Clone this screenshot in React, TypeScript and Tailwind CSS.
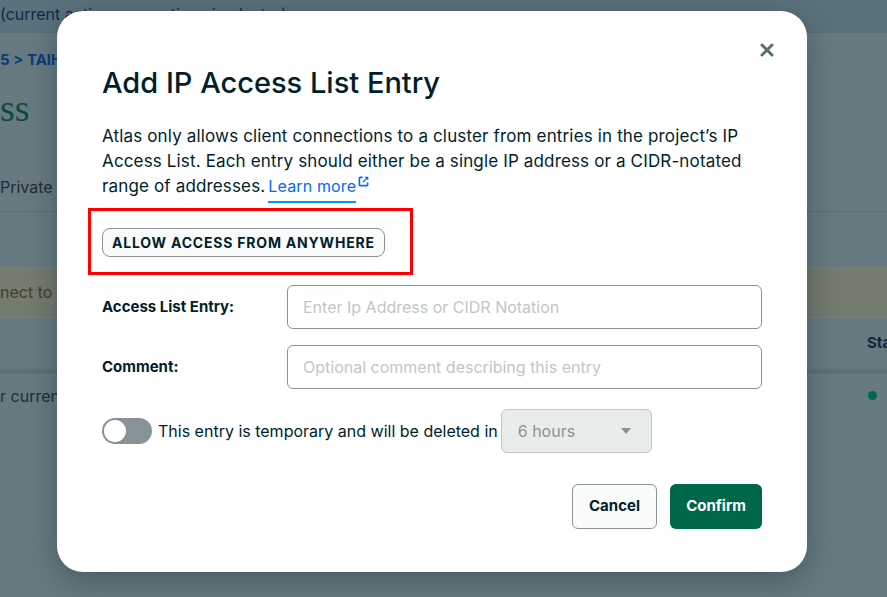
import React from 'react';

const font = { fontFamily: 'Inter, "Noto Sans", sans-serif' };

const Background = () => {
  return (
    <div className="h-[597px] w-full overflow-hidden bg-[#677a81]">
      <div className="h-[33px] bg-[#5b717c] pt-[2px] text-[16px] text-[#0b2c49]">
        (current active connections in cluster)
      </div>
      <div>
        <div className="-ml-[10px] pt-[16px] text-[15px] font-bold text-[#0b3b78]">05 &gt; TAIHI</div>
        <div className="mt-[14px] text-[38px] leading-[44px] text-[#0f4a3c]" style={{ fontFamily: '"Liberation Serif", serif' }}>
          ss
        </div>
        <div className="mt-[45px] text-[16px] leading-[24px] text-[#1d2d35]">Private</div>
        <div className="mt-[12px] h-px bg-[#5d6f77]" />
        <div className="mt-[55px] flex h-[51px] items-center border-y border-[#7d8069] bg-[#747b6f] text-[16px] text-[#4a3d1e]">
          nect to
        </div>
        <div className="flex h-[51px] items-center whitespace-nowrap pl-[867px] text-[15px] font-bold text-[#12283a]">Status</div>
        <div className="h-[5px] bg-[#5f7279]" />
        <div className="flex h-[44px] items-center justify-between text-[16px] text-[#1d2d35]">
          <span>r current IP</span>
          <span className="mr-[10px] h-[9px] w-[9px] rounded-full bg-[#00684a]" />
        </div>
      </div>
    </div>
  );
};

const Modal = () => {
  return (
    <div className="absolute left-[57px] top-[11px] h-[561px] w-[750px] rounded-[26px] bg-white px-[45px] pt-[54px] shadow-[0_8px_30px_rgba(0,30,43,0.35)]">
      <button className="absolute right-[33px] top-[32px] text-[#5c6c75]">
        <svg width="14" height="14" viewBox="0 0 14 14">
          <path d="M2 2 L12 12 M12 2 L2 12" stroke="currentColor" strokeWidth="3" strokeLinecap="round" />
        </svg>
      </button>
      <h1 className="text-[29px] font-medium leading-[36px] text-[#001e2b]">Add IP Access List Entry</h1>
      <p className="mt-[23px] text-[17px] leading-[25px] tracking-[0.15px] text-[#001e2b]">
        Atlas only allows client connections to a cluster from entries in the project’s IP Access List. Each entry should either be a single IP address or a CIDR-notated range of addresses.{' '}
        <a className="-ml-[2px] text-[16px] text-[#016bf8]">
          <span className="border-b-2 border-[#0498ec] pb-[5px]">Learn more</span>
          <svg className="ml-[2px] inline-block align-[5px]" width="11" height="11" viewBox="0 0 12 12">
            <path d="M5 1.5H2.5a1 1 0 0 0-1 1v7a1 1 0 0 0 1 1h7a1 1 0 0 0 1-1V7" fill="none" stroke="#016bf8" strokeWidth="1.8" />
            <path d="M7 0.8h4.2V5L9.6 3.4 6 7 5 6l3.6-3.6z" fill="#016bf8" />
          </svg>
        </a>
      </p>
      <div className="-ml-[14px] mt-[9px] w-[325px] border-[3px] border-[#ff0000] px-[11px] pb-[15px] pt-[17px]">
        <button className="whitespace-nowrap rounded-[8px] border border-[#889397] bg-[#f9fbfa] px-[9px] py-[3px] text-[14px] font-bold tracking-[0.8px] text-[#001e2b]">
          ALLOW ACCESS FROM ANYWHERE
        </button>
      </div>
      <div className="mt-[10px] flex items-center">
        <label className="w-[185px] text-[15px] font-bold text-[#001e2b]">Access List Entry:</label>
        <input
          className="h-[44px] flex-1 rounded-[6px] border border-[#889397] px-[15px] text-[16px] outline-none placeholder:text-[#c1c7c6]"
          placeholder="Enter Ip Address or CIDR Notation"
        />
      </div>
      <div className="mt-[16px] flex items-center">
        <label className="w-[185px] text-[15px] font-bold text-[#001e2b]">Comment:</label>
        <input
          className="h-[44px] flex-1 rounded-[6px] border border-[#889397] px-[15px] text-[16px] outline-none placeholder:text-[#c1c7c6]"
          placeholder="Optional comment describing this entry"
        />
      </div>
      <div className="mt-[20px] flex items-center">
        <div className="flex h-[26px] w-[50px] items-center rounded-full bg-[#889397] px-[2px]">
          <span className="h-[22px] w-[22px] rounded-full bg-white" />
        </div>
        <span className="ml-[6px] text-[16px] text-[#001e2b]">This entry is temporary and will be deleted in</span>
        <div className="ml-[3px] flex h-[44px] w-[151px] items-center justify-between rounded-[6px] border border-[#c1c7c6] bg-[#e8edeb] pl-[16px] pr-[20px] text-[16px] text-[#889397]">
          <span>6 hours</span>
          <svg width="10" height="6" viewBox="0 0 10 6">
            <path d="M0 0h10L5 6z" fill="#889397" />
          </svg>
        </div>
      </div>
      <div className="mt-[31px] flex justify-end gap-[13px]">
        <button className="h-[45px] w-[85px] rounded-[6px] border border-[#889397] bg-[#f9fbfa] text-[15px] font-bold text-[#001e2b]">
          Cancel
        </button>
        <button className="h-[45px] w-[92px] rounded-[6px] bg-[#00684a] text-[15px] font-bold text-white">
          Confirm
        </button>
      </div>
    </div>
  );
};

export default function App() {
  return (
    <div className="relative h-[597px] w-[887px] overflow-hidden" style={font}>
      <Background />
      <Modal />
    </div>
  );
}
